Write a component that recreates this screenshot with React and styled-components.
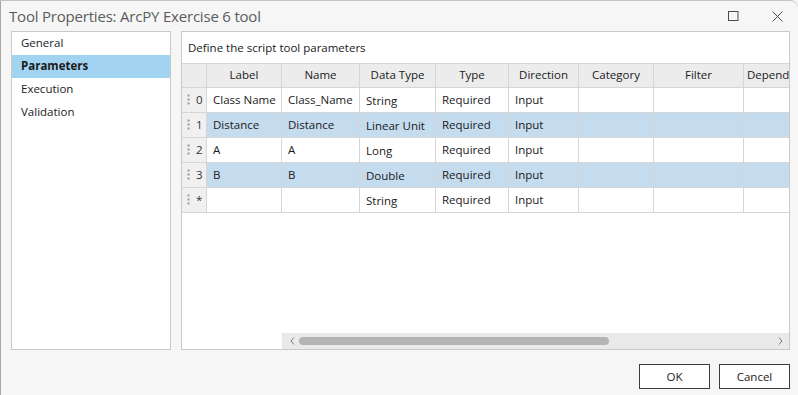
import React from 'react';
import styled, { createGlobalStyle } from 'styled-components';

const Global = createGlobalStyle`
  html, body { margin: 0; padding: 0; background: #f5f6f5; }
  body { font-family: "Open Sans", "Noto Sans", sans-serif; color: #1e1e1e; }
  * { box-sizing: border-box; }
`;

const Window = styled.div`
  width: 798px;
  height: 395px;
  background: #f5f6f5;
  border-top: 1px solid #c4c4c4;
  border-left: 1px solid #a8a8a8;
  border-top-right-radius: 8px;
  display: flex;
  flex-direction: column;
  overflow: hidden;
`;

const TitleBar = styled.div`
  height: 30px;
  display: flex;
  align-items: center;
  justify-content: space-between;
  padding-left: 8px;
`;

const Title = styled.div`
  font-size: 15px;
  color: #5c5c5c;
  letter-spacing: -0.2px;
  padding-bottom: 1px;
`;

const TitleButtons = styled.div`
  display: flex;
  align-items: center;
  gap: 33px;
  padding-right: 15px;
  height: 100%;
`;

const TitleButton = styled.div`
  width: 11px;
  height: 11px;
  display: flex;
  align-items: center;
  justify-content: center;
`;

const Content = styled.div`
  display: flex;
  gap: 10px;
  padding: 0 8px 0 10px;
  height: 319px;
`;

const Nav = styled.div`
  width: 160px;
  background: #fff;
  border: 1px solid #c9c9c9;
  display: flex;
  flex-direction: column;
`;

const NavItem = styled.div`
  height: 23px;
  line-height: 21px;
  padding-left: 9px;
  font-size: 11.5px;
  font-weight: ${p => (p.$active ? 700 : 400)};
  background: ${p => (p.$active ? '#a2d4f2' : 'transparent')};
  color: #1a1a1a;
`;

const Panel = styled.div`
  flex: 1;
  background: #fff;
  border: 1px solid #c9c9c9;
  display: flex;
  flex-direction: column;
  overflow: hidden;
`;

const PanelHeader = styled.div`
  height: 31px;
  line-height: 31px;
  padding-left: 6px;
  font-size: 11.5px;
  color: #1a1a1a;
`;

const GridWrap = styled.div`
  flex: 1;
  display: flex;
  flex-direction: column;
  overflow: hidden;
  border-top: 1px solid #d6d6d6;
`;

const COLS = '25px 75px 78px 76px 73px 70px 75px 90px 90px';

const Row = styled.div`
  display: grid;
  grid-template-columns: ${COLS};
  height: ${p => (p.$header ? 24 : 25)}px;
  width: max-content;
  background: ${p => (p.$header ? '#ececec' : p.$sel ? '#c5dcef' : '#fff')};
`;

const Cell = styled.div`
  border-right: 1px solid #d6d6d6;
  border-bottom: 1px solid #d6d6d6;
  font-size: 11.5px;
  display: flex;
  align-items: center;
  justify-content: ${p => (p.$center ? 'center' : 'flex-start')};
  padding-left: ${p => (p.$center ? 0 : p.$pad ?? 6)}px;
  padding-top: ${p => (p.$low ? 1 : 0)}px;
  padding-bottom: ${p => (p.$low ? 0 : 2)}px;
  white-space: nowrap;
  overflow: hidden;
  color: #1a1a1a;
`;

const RowHead = styled.div`
  border-right: 1px solid #d6d6d6;
  border-bottom: 1px solid #d6d6d6;
  background: #f0f0f0;
  display: flex;
  align-items: center;
  padding-left: 5px;
  padding-bottom: 1px;
  gap: 6px;
  font-size: 11.5px;
  color: #333;
`;

const Filler = styled.div`
  flex: 1;
`;

const ScrollRow = styled.div`
  height: 16px;
  display: flex;
  padding-left: 100px;
`;

const ScrollBar = styled.div`
  flex: 1;
  background: #e9e9e9;
  display: flex;
  align-items: center;
  padding: 0 4px 0 5px;
`;

const Arrow = styled.div`
  width: 10px;
  display: flex;
  align-items: center;
  justify-content: center;
`;

const Track = styled.div`
  flex: 1;
  display: flex;
  align-items: center;
  padding: 0 6px 0 2px;
`;

const Thumb = styled.div`
  height: 8px;
  border-radius: 4px;
  background: #b4b4b4;
`;

const Footer = styled.div`
  display: flex;
  justify-content: flex-end;
  gap: 9px;
  padding: 14px 8px 0 0;
`;

const Button = styled.div`
  width: 71px;
  height: 25px;
  border: 1px solid #3c3c3c;
  background: #fff;
  display: flex;
  align-items: center;
  justify-content: center;
  padding-bottom: 1px;
  font-size: 11.5px;
  color: #1a1a1a;
`;

const Grip = () => (
  <svg width="3" height="11" viewBox="0 0 3 11">
    <rect x="0.5" y="0.5" width="2" height="2" fill="#9a9a9a" />
    <rect x="0.5" y="4.5" width="2" height="2" fill="#9a9a9a" />
    <rect x="0.5" y="8.5" width="2" height="2" fill="#9a9a9a" />
  </svg>
);

const headers = ['Label', 'Name', 'Data Type', 'Type', 'Direction', 'Category', 'Filter'];

const rows = [
  { id: '0', cells: ['Class Name', 'Class_Name', 'String', 'Required', 'Input'] },
  { id: '1', cells: ['Distance', 'Distance', 'Linear Unit', 'Required', 'Input'], sel: true },
  { id: '2', cells: ['A', 'A', 'Long', 'Required', 'Input'] },
  { id: '3', cells: ['B', 'B', 'Double', 'Required', 'Input'], sel: true },
  { id: '*', cells: ['', '', 'String', 'Required', 'Input'] },
];

export default function App() {
  return (
    <>
      <Global />
      <Window>
        <TitleBar>
          <Title>Tool Properties: ArcPY Exercise 6 tool</Title>
          <TitleButtons>
            <TitleButton>
              <svg width="11" height="11" viewBox="0 0 11 11">
                <rect x="0.5" y="0.5" width="9.5" height="9" fill="none" stroke="#4a4a4a" strokeWidth="1" />
              </svg>
            </TitleButton>
            <TitleButton>
              <svg width="11" height="11" viewBox="0 0 11 11">
                <path d="M0.5 0.5 L10.5 10.5 M10.5 0.5 L0.5 10.5" stroke="#4a4a4a" strokeWidth="1" />
              </svg>
            </TitleButton>
          </TitleButtons>
        </TitleBar>
        <Content>
          <Nav>
            <NavItem>General</NavItem>
            <NavItem $active>Parameters</NavItem>
            <NavItem>Execution</NavItem>
            <NavItem>Validation</NavItem>
          </Nav>
          <Panel>
            <PanelHeader>Define the script tool parameters</PanelHeader>
            <GridWrap>
              <Row $header>
                <Cell $center />
                {headers.map(h => (
                  <Cell key={h} $center>{h}</Cell>
                ))}
                <Cell $pad={3}>Depend</Cell>
              </Row>
              {rows.map(r => (
                <Row key={r.id} $sel={r.sel}>
                  <RowHead>
                    <Grip />
                    <span>{r.id}</span>
                  </RowHead>
                  {r.cells.map((c, i) => (
                    <Cell key={i} $low={i === 2}>{c}</Cell>
                  ))}
                  <Cell />
                  <Cell />
                  <Cell />
                </Row>
              ))}
              <Filler />
              <ScrollRow>
                <ScrollBar>
                  <Arrow>
                    <svg width="5" height="8" viewBox="0 0 5 8">
                      <path d="M4 0.5 L1 4 L4 7.5" fill="none" stroke="#7a7a7a" strokeWidth="1" />
                    </svg>
                  </Arrow>
                  <Track>
                    <Thumb style={{ width: '310px' }} />
                  </Track>
                  <Arrow>
                    <svg width="5" height="8" viewBox="0 0 5 8">
                      <path d="M1 0.5 L4 4 L1 7.5" fill="none" stroke="#7a7a7a" strokeWidth="1" />
                    </svg>
                  </Arrow>
                </ScrollBar>
              </ScrollRow>
            </GridWrap>
          </Panel>
        </Content>
        <Footer>
          <Button>OK</Button>
          <Button>Cancel</Button>
        </Footer>
      </Window>
    </>
  );
}
